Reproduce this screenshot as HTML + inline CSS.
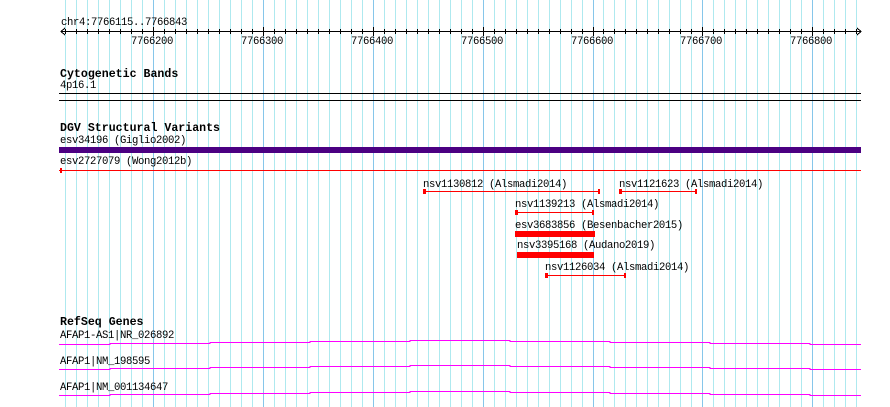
<!DOCTYPE html>
<html><head><meta charset="utf-8"><style>
html,body{margin:0;padding:0;background:#fff;width:890px;height:407px;overflow:hidden}
svg{display:block}
text{font-family:"Liberation Mono","DejaVu Sans Mono",monospace;font-size:10.6px;letter-spacing:-0.36px;fill:#000}
.b{font-weight:bold;font-size:11.6px;letter-spacing:0}
</style></head><body>
<svg width="890" height="407" viewBox="0 0 890 407" shape-rendering="crispEdges">
<path fill="none" stroke="#aee9ef" stroke-width="1" d="M65.5 0V407M76.5 0V407M87.5 0V407M98.5 0V407M109.5 0V407M120.5 0V407M131.5 0V407M142.5 0V407M164.5 0V407M175.5 0V407M186.5 0V407M197.5 0V407M208.5 0V407M219.5 0V407M230.5 0V407M241.5 0V407M252.5 0V407M274.5 0V407M285.5 0V407M296.5 0V407M307.5 0V407M318.5 0V407M329.5 0V407M340.5 0V407M351.5 0V407M362.5 0V407M384.5 0V407M395.5 0V407M406.5 0V407M417.5 0V407M428.5 0V407M439.5 0V407M450.5 0V407M461.5 0V407M472.5 0V407M494.5 0V407M505.5 0V407M516.5 0V407M527.5 0V407M538.5 0V407M549.5 0V407M560.5 0V407M571.5 0V407M582.5 0V407M603.5 0V407M614.5 0V407M625.5 0V407M636.5 0V407M647.5 0V407M658.5 0V407M669.5 0V407M680.5 0V407M691.5 0V407M713.5 0V407M724.5 0V407M735.5 0V407M746.5 0V407M757.5 0V407M768.5 0V407M779.5 0V407M790.5 0V407M801.5 0V407M823.5 0V407M834.5 0V407M845.5 0V407M856.5 0V407"/>
<path fill="none" stroke="#86c6ea" stroke-width="1" d="M153.5 0V407M263.5 0V407M373.5 0V407M483.5 0V407M593.5 0V407M702.5 0V407M812.5 0V407"/>
<!-- ticks -->
<path fill="none" stroke="#000" stroke-width="1" d="M65.5 29V34M76.5 29V34M87.5 29V34M98.5 29V34M109.5 29V34M120.5 29V34M131.5 29V34M142.5 29V34M164.5 29V34M175.5 29V34M186.5 29V34M197.5 29V34M208.5 29V34M219.5 29V34M230.5 29V34M241.5 29V34M252.5 29V34M274.5 29V34M285.5 29V34M296.5 29V34M307.5 29V34M318.5 29V34M329.5 29V34M340.5 29V34M351.5 29V34M362.5 29V34M384.5 29V34M395.5 29V34M406.5 29V34M417.5 29V34M428.5 29V34M439.5 29V34M450.5 29V34M461.5 29V34M472.5 29V34M494.5 29V34M505.5 29V34M516.5 29V34M527.5 29V34M538.5 29V34M549.5 29V34M560.5 29V34M571.5 29V34M582.5 29V34M603.5 29V34M614.5 29V34M625.5 29V34M636.5 29V34M647.5 29V34M658.5 29V34M669.5 29V34M680.5 29V34M691.5 29V34M713.5 29V34M724.5 29V34M735.5 29V34M746.5 29V34M757.5 29V34M768.5 29V34M779.5 29V34M790.5 29V34M801.5 29V34M823.5 29V34M834.5 29V34M845.5 29V34M856.5 29V34M153.5 27V36M263.5 27V36M373.5 27V36M483.5 27V36M593.5 27V36M702.5 27V36M812.5 27V36"/>
<!-- ruler -->
<text x="61" y="25">chr4:7766115..7766843</text>
<line x1="61" y1="31.5" x2="861" y2="31.5" stroke="#000"/>
<polyline points="65,28 61,31.5 65,35" fill="none" stroke="#000"/>
<polyline points="857,28 861,31.5 857,35" fill="none" stroke="#000"/>
<text x="131" y="44">7766200</text>
<text x="241" y="44">7766300</text>
<text x="351" y="44">7766400</text>
<text x="461" y="44">7766500</text>
<text x="571" y="44">7766600</text>
<text x="680" y="44">7766700</text>
<text x="790" y="44">7766800</text>
<!-- cytobands -->
<text class="b" x="60" y="77">Cytogenetic Bands</text>
<text x="60" y="88">4p16.1</text>
<rect x="59" y="93" width="802" height="1" fill="#000"/>
<rect x="59" y="100" width="802" height="1" fill="#000"/>
<!-- DGV -->
<text class="b" x="60" y="131">DGV Structural Variants</text>
<text x="60" y="143">esv34196 (Giglio2002)</text>
<rect x="59" y="147" width="802" height="6" fill="#4b0082"/>
<text x="60" y="164">esv2727079 (Wong2012b)</text>
<rect x="59" y="170" width="802" height="1" fill="#f00"/>
<rect x="60" y="168" width="2" height="5" fill="#f00"/>

<text x="423" y="187">nsv1130812 (Alsmadi2014)</text>
<rect x="424" y="191" width="176" height="1" fill="#f00"/>
<rect x="423" y="189" width="3" height="5" fill="#f00"/><rect x="598" y="189" width="2" height="5" fill="#f00"/>
<text x="619" y="187">nsv1121623 (Alsmadi2014)</text>
<rect x="620" y="191" width="76" height="1" fill="#f00"/>
<rect x="619" y="189" width="3" height="5" fill="#f00"/><rect x="695" y="189" width="2" height="5" fill="#f00"/>

<text x="515" y="207">nsv1139213 (Alsmadi2014)</text>
<rect x="516" y="212" width="77" height="1" fill="#f00"/>
<rect x="515" y="210" width="3" height="5" fill="#f00"/><rect x="592" y="210" width="2" height="5" fill="#f00"/>

<text x="515" y="228">esv3683856 (Besenbacher2015)</text>
<rect x="515" y="231" width="80" height="6" fill="#f00"/>
<text x="517" y="248">nsv3395168 (Audano2019)</text>
<rect x="517" y="252" width="77" height="6" fill="#f00"/>

<text x="545" y="270">nsv1126034 (Alsmadi2014)</text>
<rect x="546" y="275" width="79" height="1" fill="#f00"/>
<rect x="545" y="273" width="3" height="5" fill="#f00"/><rect x="624" y="273" width="2" height="5" fill="#f00"/>

<!-- RefSeq -->
<text class="b" x="60" y="325">RefSeq Genes</text>
<text x="60" y="338">AFAP1-AS1|NR_026892</text>
<text x="60" y="364">AFAP1|NM_198595</text>
<text x="60" y="390">AFAP1|NM_001134647</text>
<g fill="none" stroke="#f0f" stroke-width="1">
<polyline points="59,344.5 110,344.5 110,343.5 210,343.5 210,342.5 310,342.5 310,341.5 410,341.5 410,340.5 510,340.5 510,341.5 610,341.5 610,342.5 710,342.5 710,343.5 810,343.5 810,344.5 861,344.5"/>
<polyline points="59,369.5 110,369.5 110,368.5 210,368.5 210,367.5 310,367.5 310,366.5 410,366.5 410,365.5 510,365.5 510,366.5 610,366.5 610,367.5 710,367.5 710,368.5 810,368.5 810,369.5 861,369.5"/>
<polyline points="59,395.5 110,395.5 110,394.5 210,394.5 210,393.5 310,393.5 310,392.5 410,392.5 410,391.5 510,391.5 510,392.5 610,392.5 610,393.5 710,393.5 710,394.5 810,394.5 810,395.5 861,395.5"/>
</g>
</svg>
</body></html>
